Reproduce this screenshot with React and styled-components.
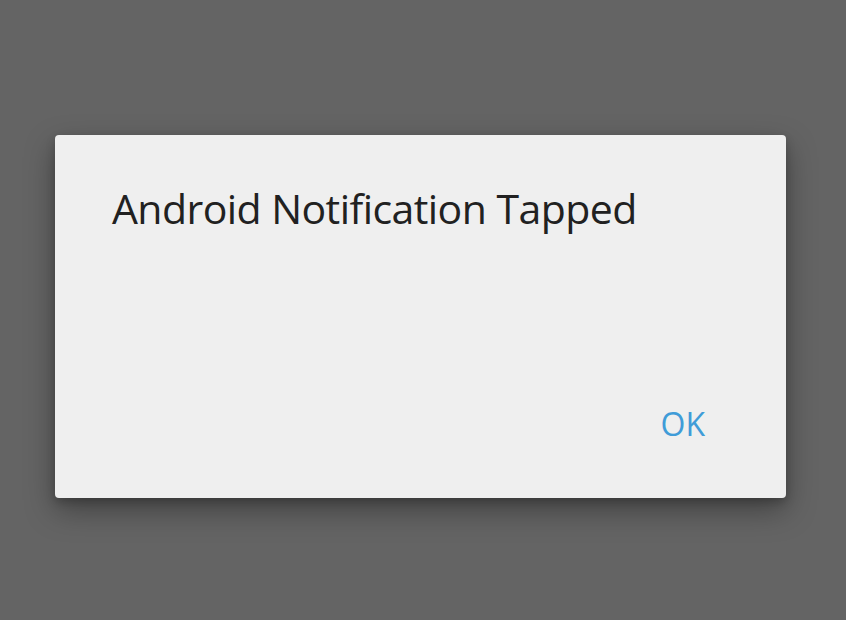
import React from "react";
import styled, { createGlobalStyle } from "styled-components";

const Global = createGlobalStyle`
  html, body { margin: 0; padding: 0; }
  body { background: #646464; font-family: "Open Sans", "Noto Sans", sans-serif; }
`;

const Backdrop = styled.div`
  width: 846px;
  height: 620px;
  background: #646464;
  display: flex;
  align-items: flex-start;
  padding: 135px 0 0 55px;
  box-sizing: border-box;
`;

const Dialog = styled.div`
  width: 731px;
  height: 363px;
  background: #efefef;
  border-radius: 4px;
  box-shadow: 0 12px 30px rgba(0, 0, 0, 0.35), 0 4px 10px rgba(0, 0, 0, 0.2);
  display: flex;
  flex-direction: column;
  box-sizing: border-box;
  padding: 48px 57px 0 57px;
`;

const Title = styled.div`
  font-family: "Open Sans", "Noto Sans", sans-serif;
  font-size: 41px;
  letter-spacing: -0.56px;
  color: #212121;
  line-height: 50px;
  flex: 1;
`;

const Actions = styled.div`
  display: flex;
  justify-content: flex-end;
  padding: 0 24px 54px 0;
`;

const Button = styled.button`
  background: none;
  border: none;
  padding: 0;
  font-family: "Open Sans", "Noto Sans", sans-serif;
  font-size: 32px;
  color: #3f9cd8;
  line-height: 40px;
  cursor: pointer;
`;

export default function App() {
  return (
    <>
      <Global />
      <Backdrop>
        <Dialog>
          <Title>Android Notification Tapped</Title>
          <Actions>
            <Button>OK</Button>
          </Actions>
        </Dialog>
      </Backdrop>
    </>
  );
}
